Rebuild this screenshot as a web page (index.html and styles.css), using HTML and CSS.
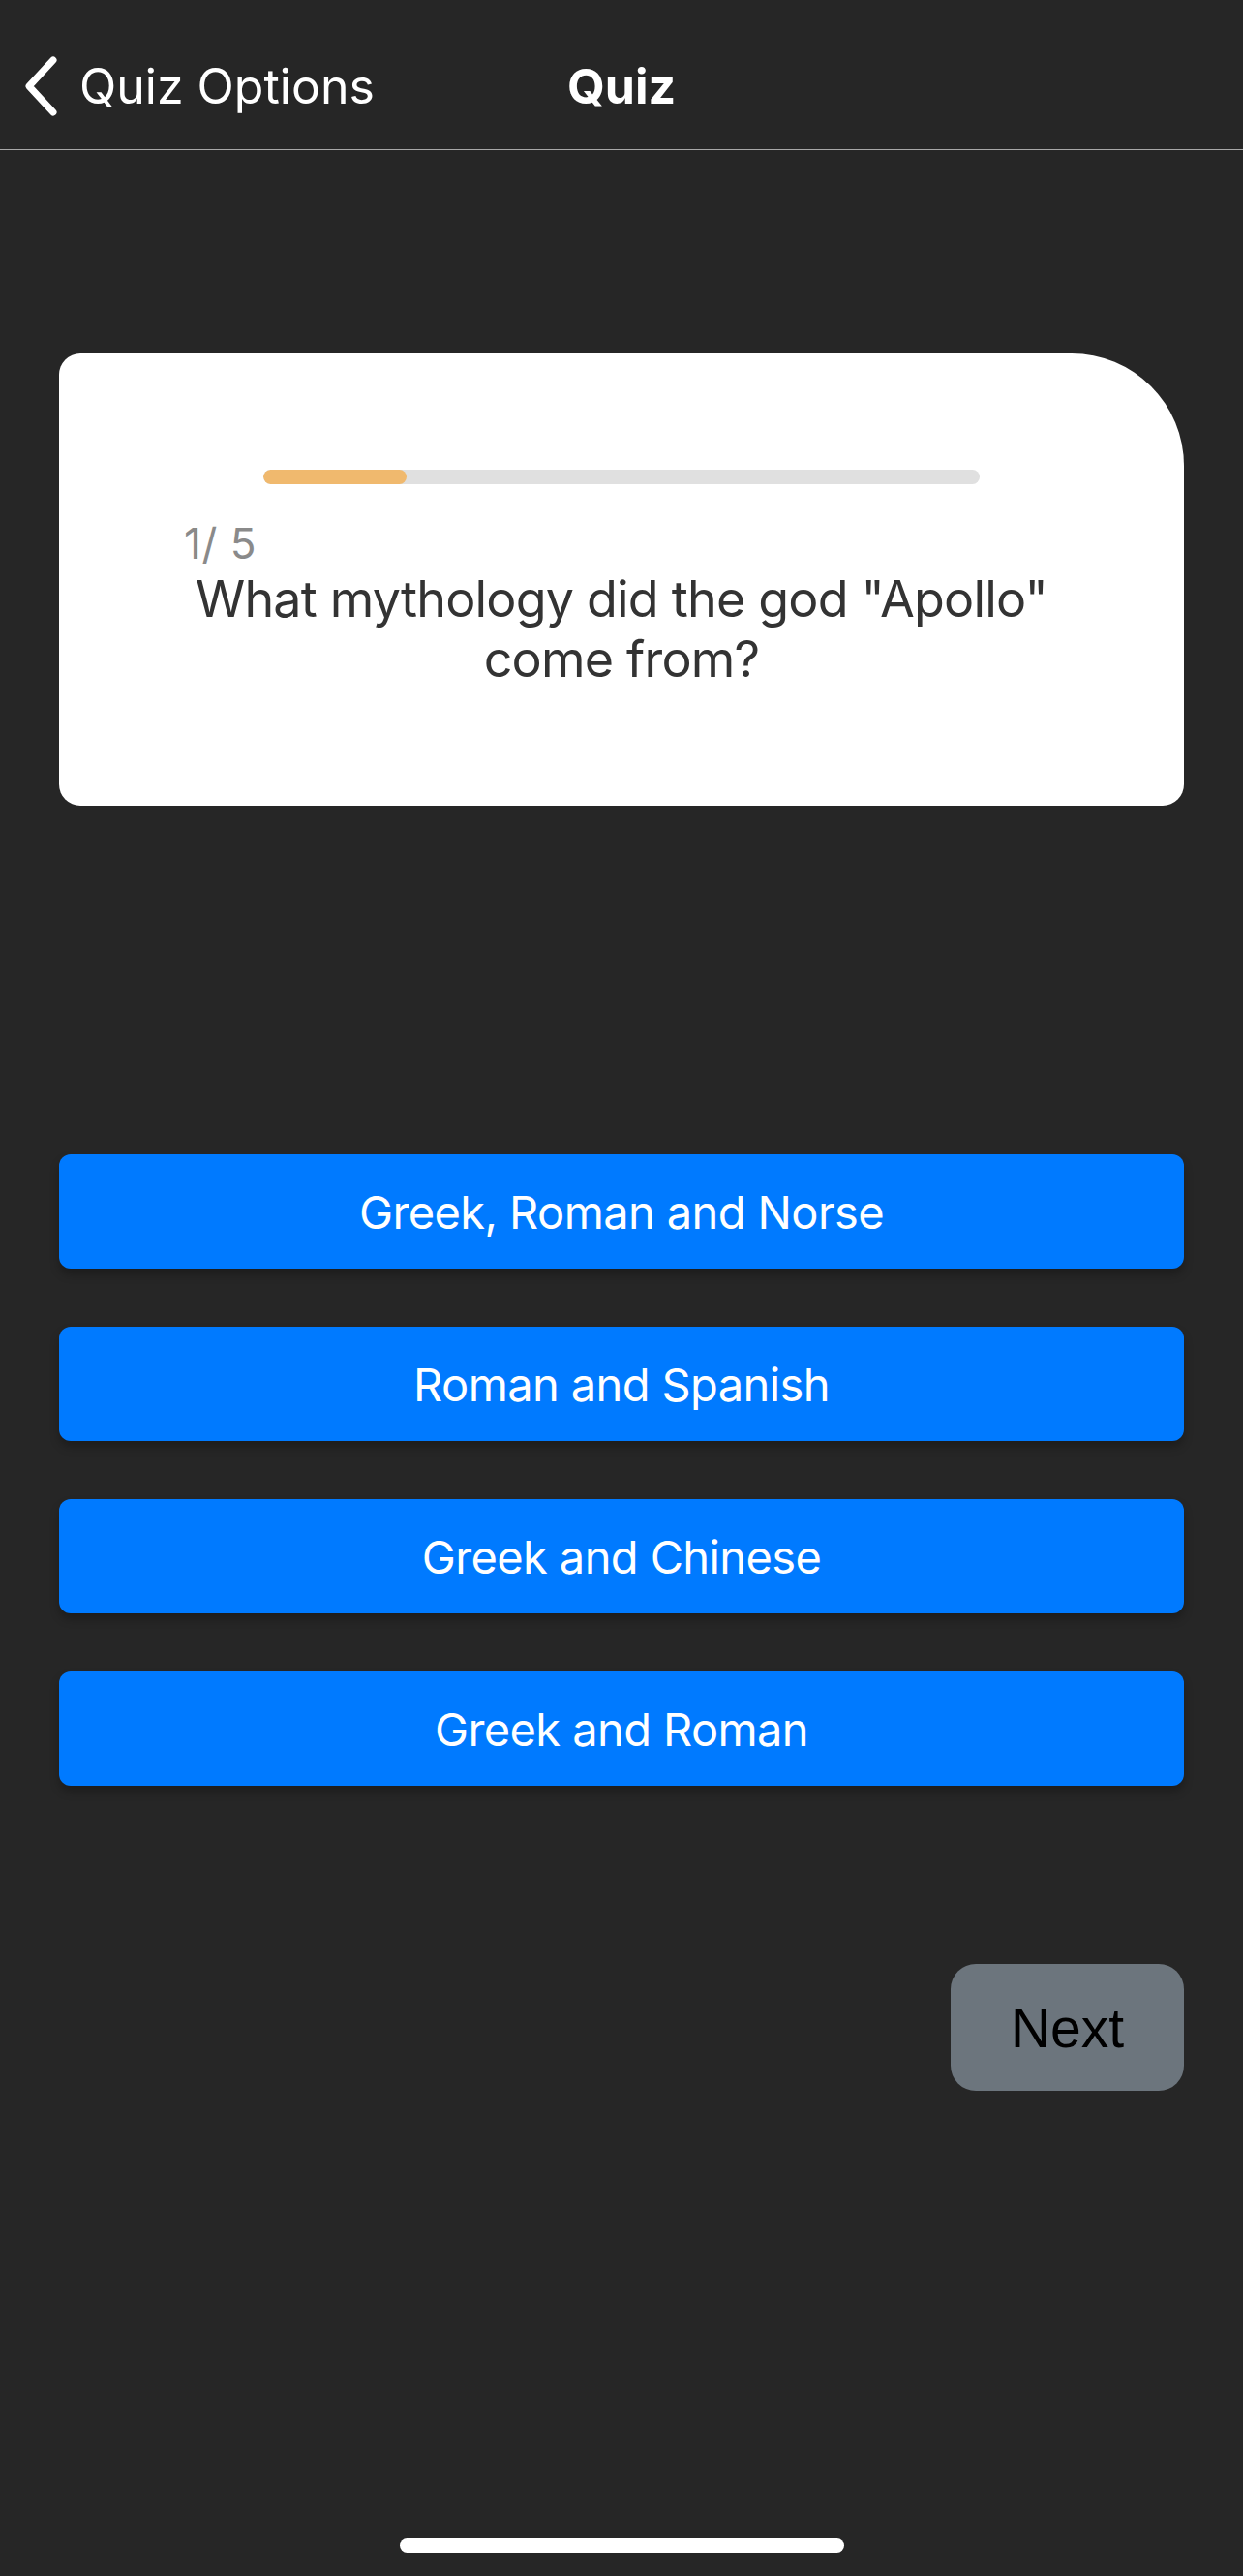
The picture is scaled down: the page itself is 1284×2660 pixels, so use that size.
FILE: index.html
```html
<!DOCTYPE html>
<html lang="en">
<head>
<meta charset="utf-8">
<title>Quiz</title>
<link rel="stylesheet" href="styles.css">
</head>
<body>
<div class="screen">
  <header class="navbar">
    <div class="nav-left">
      <svg class="chevron" width="40" height="64" viewBox="0 0 40 64">
        <path d="M33 5 L8 32 L33 59" fill="none" stroke="#fff" stroke-width="7" stroke-linecap="round" stroke-linejoin="round"/>
      </svg>
      <span class="back-label">Quiz Options</span>
    </div>
    <div class="nav-title">Quiz</div>
    <div class="nav-right"></div>
  </header>

  <main class="content">
    <section class="card">
      <div class="progress">
        <div class="progress-fill" style="width: 20%"></div>
      </div>
      <div class="counter">1/ 5</div>
      <p class="question">What mythology did the god "Apollo" come from?</p>
    </section>

    <div class="answers">
      <button class="answer">Greek, Roman and Norse</button>
      <button class="answer">Roman and Spanish</button>
      <button class="answer">Greek and Chinese</button>
      <button class="answer">Greek and Roman</button>
    </div>

    <div class="next-row">
      <button class="next">Next</button>
    </div>
  </main>

  <div class="home-indicator"></div>
</div>
</body>
</html>
```

FILE: styles.css
```css
* {
  box-sizing: border-box;
}

html, body {
  margin: 0;
  padding: 0;
  background: #262626;
}

.screen {
  position: relative;
  width: 1284px;
  min-height: 2660px;
  background: #262626;
  font-family: Inter, "Noto Sans", sans-serif;
  color: #fff;
}

.navbar {
  height: 155px;
  border-bottom: 1px solid #a8a8a8;
  display: grid;
  grid-template-columns: 1fr auto 1fr;
  align-items: start;
  padding-top: 57px;
}

.nav-left {
  display: flex;
  align-items: center;
  padding-left: 22px;
  height: 64px;
}

.chevron {
  display: block;
  flex: none;
}

.back-label {
  margin-left: 20px;
  font-size: 50px;
  font-weight: 400;
  letter-spacing: 0;
  color: #fff;
}

.nav-title {
  height: 64px;
  display: flex;
  align-items: center;
  font-size: 50px;
  font-weight: 700;
  color: #fff;
}

.content {
  padding: 0 61px;
}

.card {
  margin-top: 210px;
  height: 467px;
  background: #fff;
  border-radius: 22px 116px 22px 22px;
  padding: 120px 129px 0;
  display: flex;
  flex-direction: column;
  align-items: stretch;
}

.progress {
  align-self: center;
  width: 740px;
  height: 15px;
  border-radius: 8px;
  background: #e0e0e0;
  overflow: hidden;
}

.progress-fill {
  height: 100%;
  background: #f0b96e;
  border-radius: 8px;
}

.counter {
  margin-top: 38px;
  font-size: 44px;
  line-height: 46px;
  color: #8a8a8a;
  letter-spacing: 0.5px;
}

.question {
  margin: 4px -20px 0;
  font-size: 52px;
  line-height: 62px;
  text-align: center;
  color: #333;
  letter-spacing: -0.8px;
}

.answers {
  margin-top: 360px;
  display: flex;
  flex-direction: column;
  gap: 60px;
}

.answer {
  height: 118px;
  border: none;
  border-radius: 12px;
  background: #007aff;
  color: #fff;
  font-family: Inter, "Noto Sans", sans-serif;
  font-size: 47px;
  letter-spacing: -0.6px;
  box-shadow: 0 6px 10px rgba(0, 0, 0, 0.25);
  padding: 0;
}

.next-row {
  margin-top: 184px;
  display: flex;
  justify-content: flex-end;
}

.next {
  width: 241px;
  height: 131px;
  border: none;
  border-radius: 26px;
  background: #6c757d;
  color: #000;
  font-family: "Liberation Sans", Arial, sans-serif;
  font-size: 57px;
  padding: 0;
}

.home-indicator {
  position: absolute;
  left: 413px;
  bottom: 24px;
  width: 459px;
  height: 15px;
  border-radius: 8px;
  background: #fff;
}
```
